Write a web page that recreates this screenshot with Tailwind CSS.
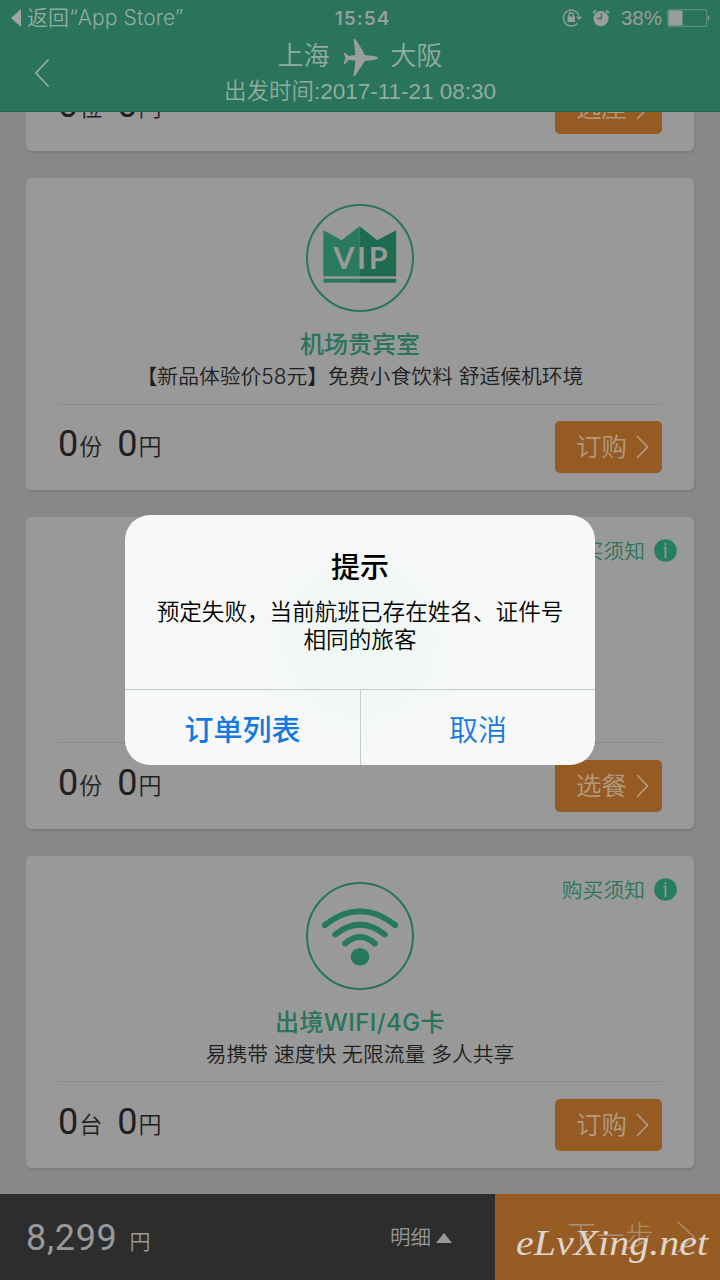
<!DOCTYPE html>
<html lang="zh-CN">
<head>
<meta charset="utf-8">
<title>上海 - 大阪</title>
<script src="https://cdn.jsdelivr.net/npm/@tailwindcss/browser@4"></script>
</head>
<body class="bg-[#888888]">
<div class="relative flex h-[1280px] w-[720px] flex-col overflow-hidden bg-[#888888] font-['Inter','Noto_Sans_CJK_SC',sans-serif] text-[#202020]">

  <!-- Status bar and title -->
  <header class="h-[112px] shrink-0 border-b border-[#226149] bg-[#29745a] text-[#999d9b]">
    <div class="grid h-9 grid-cols-3 items-center pl-[11px] pr-[10px]">
      <div class="flex items-center gap-[5px] whitespace-nowrap text-[21px] leading-9 text-[#93aca2]">
        <svg class="h-[18px] w-[11px]" viewBox="0 0 11 18" fill="#a0a5a3"><path d="M0 9 10 0v18z"/></svg>
        <span class="font-['Inter','Noto_Sans_CJK_SC',sans-serif] font-[350] tracking-[0.1px]">返回“App Store”</span>
      </div>
      <div class="pt-[2px] pl-1 text-center font-['Inter'] text-[19px] font-semibold tracking-[1px]">15:54</div>
      <div class="flex items-center justify-end">
        <svg class="mr-[10px] h-5 w-5" viewBox="0 0 20 20" fill="none" stroke="#999d9b" stroke-width="1.4"><path d="M15.500 15.200A8 8 0 1 1 17 7.500"/><path d="M14 8.500h6L17 12z" fill="#999d9b" stroke="none"/><rect x="5.500" y="8.500" width="7.500" height="5.500" fill="#999d9b" stroke="none"/><path d="M7 9V7a2.200 2.200 0 0 1 4.400 0v2"/></svg>
        <svg class="mr-[11px] h-[18px] w-[18px]" viewBox="0 0 18 18"><circle cx="9" cy="9.600" r="7.600" fill="#999d9b"/><path d="M1 4 4 1.300M17 4l-3-2.700" stroke="#999d9b" stroke-width="1.800"/><path d="M9.300 4.500v5H5" stroke="#29745a" stroke-width="1.300" fill="none"/></svg>
        <span class="mr-[5px] font-['Liberation_Sans'] text-[20.500px] leading-6">38%</span>
        <svg class="h-[18px] w-[43px]" viewBox="0 0 43 18"><rect x=".7" y=".7" width="39" height="16.600" rx="2" fill="none" stroke="#5f8c7a" stroke-width="1.200"/><rect x="1.500" y="1.500" width="14" height="15" rx="1" fill="#999d9b"/><path d="M41 6q3 3 0 6z" fill="#999d9b"/></svg>
      </div>
    </div>
    <div class="grid grid-cols-[100px_1fr_100px]">
      <svg class="ml-[34px] mt-[22px] h-[30px] w-4" viewBox="0 0 16 30" fill="none" stroke="#93aca2" stroke-width="1.800"><path d="M14.500 1.500 2 15l12.500 13.500"/></svg>
      <div class="font-['Liberation_Sans','Noto_Sans_CJK_SC',sans-serif] text-[#93aca2]">
        <div class="flex h-[40px] items-center justify-center gap-[13px] text-[26px] font-[350] leading-[40px]">
          <span>上海</span>
          <svg class="mt-[2px] h-[37px] w-[35px]" viewBox="0 0 35 37" fill="#9a9e9c"><path d="M12 0 14.500 3 22 16l9 1q4 1 4 2t-4 2l-9 1-8 12-2 3h-1.500l2-15.500-7-.5L2 25H.500l2-6L.5 14H2.500l3 3 7-1L10.500 0z"/></svg>
          <span>大阪</span>
        </div>
        <div class="text-center text-[22.500px] font-[350] leading-[32px]">出发时间:2017-11-21 08:30</div>
      </div>
    </div>
  </header>

  <!-- Service list -->
  <main class="flex flex-1 flex-col gap-[27px] overflow-hidden px-[26px]">
    <section class="-mt-[273px] flex h-[312px] shrink-0 flex-col justify-end rounded-[5px] bg-[#999999] px-8 shadow-[1px_2px_2px_#7b7b7b]">
      <div class="flex h-[87px] items-start justify-between pt-[18px]">
        <div class="flex items-baseline font-[350] leading-[47px]"><span class="font-['Roboto'] text-[36px] font-normal">0</span><span class="relative -top-px ml-px mr-[15px] text-[23px]">位</span><span class="font-['Roboto'] text-[36px] font-normal">0</span><span class="relative -top-px ml-px text-[23px]">円</span></div>
        <div class="flex h-[52px] w-[107px] items-center gap-[9px] rounded-[5px] bg-[#955b22] pl-[21px] text-[25.500px] font-[350] text-[#b39b83]"><span>选座</span><svg class="h-6 w-[13px]" viewBox="0 0 13 24" fill="none" stroke="#b39b83" stroke-width="1.700"><path d="m1 1 10.500 11L1 23"/></svg></div>
      </div>
    </section>

    <section class="flex h-[312px] shrink-0 flex-col rounded-[5px] bg-[#999999] px-8 pt-[26px] shadow-[1px_2px_2px_#7b7b7b]">
      <svg class="mx-auto h-[108px] w-[108px] shrink-0" viewBox="0 0 109 109">
        <circle cx="54.500" cy="54.500" r="53.500" fill="none" stroke="#29745a" stroke-width="2"/>
        <path d="M17.500 26.500 36 36.500 54 22.500V73H17.500zM17.500 75.500h36.500v4H17.500z" fill="#2a7a5e"/>
        <path d="M54 22.500 72 36.500 91 26.500V73H54zM54 75.500h37v4H54z" fill="#1e6b50"/>
        <text x="27.500" y="65.500" textLength="55" font-family="Lato, sans-serif" font-size="31" font-weight="700" fill="#999999">VIP</text>
      </svg>
      <h2 class="mt-[16px] text-center text-[24px] font-medium leading-[34px] text-[#29745a]">机场贵宾室</h2>
      <p class="h-[43px] whitespace-nowrap border-b border-[#8a8a8a] text-center text-[20.800px] font-[350] leading-[30px]">【新品体验价58元】免费小食饮料 舒适候机环境</p>
      <div class="flex items-start justify-between pt-[16px]">
        <div class="flex items-baseline font-[350] leading-[47px]"><span class="font-['Roboto'] text-[36px] font-normal">0</span><span class="relative -top-px ml-px mr-[15px] text-[23px]">份</span><span class="font-['Roboto'] text-[36px] font-normal">0</span><span class="relative -top-px ml-px text-[23px]">円</span></div>
        <div class="flex h-[52px] w-[107px] items-center gap-[9px] rounded-[5px] bg-[#955b22] pl-[21px] text-[25.500px] font-[350] text-[#b39b83]"><span>订购</span><svg class="h-6 w-[13px]" viewBox="0 0 13 24" fill="none" stroke="#b39b83" stroke-width="1.700"><path d="m1 1 10.500 11L1 23"/></svg></div>
      </div>
    </section>

    <section class="flex h-[312px] shrink-0 flex-col rounded-[5px] bg-[#999999] px-8 shadow-[1px_2px_2px_#7b7b7b]">
      <div class="-mr-[15px] flex h-[225px] items-start justify-end gap-[9px] pt-[19px] text-[20.800px] font-[350] leading-[32px] text-[#29745a]"><span>购买须知</span><svg class="mt-[3px] h-[23px] w-[23px]" viewBox="0 0 23 23"><circle cx="11.500" cy="11.500" r="11.300" fill="#237f5e"/><path d="M11.500 4v2.500M9.500 8.500h2V19" stroke="#999" stroke-width="1.700" fill="none"/></svg></div>
      <div class="flex items-start justify-between border-t border-[#8a8a8a] pt-[17px]">
        <div class="flex items-baseline font-[350] leading-[47px]"><span class="font-['Roboto'] text-[36px] font-normal">0</span><span class="relative -top-px ml-px mr-[15px] text-[23px]">份</span><span class="font-['Roboto'] text-[36px] font-normal">0</span><span class="relative -top-px ml-px text-[23px]">円</span></div>
        <div class="flex h-[52px] w-[107px] items-center gap-[9px] rounded-[5px] bg-[#955b22] pl-[21px] text-[25.500px] font-[350] text-[#b39b83]"><span>选餐</span><svg class="h-6 w-[13px]" viewBox="0 0 13 24" fill="none" stroke="#b39b83" stroke-width="1.700"><path d="m1 1 10.500 11L1 23"/></svg></div>
      </div>
    </section>

    <section class="relative flex h-[312px] shrink-0 flex-col rounded-[5px] bg-[#999999] px-8 pt-[26px] shadow-[1px_2px_2px_#7b7b7b]">
      <div class="absolute right-[17px] top-[19px] flex items-start gap-[9px] text-[20.800px] font-[350] leading-[32px] text-[#29745a]"><span>购买须知</span><svg class="mt-[3px] h-[23px] w-[23px]" viewBox="0 0 23 23"><circle cx="11.500" cy="11.500" r="11.300" fill="#237f5e"/><path d="M11.500 4v2.500M9.500 8.500h2V19" stroke="#999" stroke-width="1.700" fill="none"/></svg></div>
      <svg class="mx-auto h-[108px] w-[108px] shrink-0" viewBox="0 0 109 109" fill="none" stroke="#26795b" stroke-linecap="round">
        <circle cx="54.500" cy="54.500" r="53.500" stroke="#29745a" stroke-width="2"/>
        <path d="M19 43.500q35.500-28 71 0M29.500 53q25-20 50 0M39.500 62q15-13 30 0" stroke-width="6"/>
        <ellipse cx="54.500" cy="75.500" rx="9.500" ry="9" fill="#26795b" stroke="none"/>
      </svg>
      <h2 class="mt-[16px] text-center text-[24px] font-medium leading-[34px] tracking-[0.4px] text-[#29745a]">出境WIFI/4G卡</h2>
      <p class="h-[42px] whitespace-nowrap border-b border-[#8a8a8a] text-center text-[20.800px] font-[350] leading-[30px]">易携带 速度快 无限流量 多人共享</p>
      <div class="flex items-start justify-between pt-[17px]">
        <div class="flex items-baseline font-[350] leading-[47px]"><span class="font-['Roboto'] text-[36px] font-normal">0</span><span class="relative -top-px ml-px mr-[15px] text-[23px]">台</span><span class="font-['Roboto'] text-[36px] font-normal">0</span><span class="relative -top-px ml-px text-[23px]">円</span></div>
        <div class="flex h-[52px] w-[107px] items-center gap-[9px] rounded-[5px] bg-[#955b22] pl-[21px] text-[25.500px] font-[350] text-[#b39b83]"><span>订购</span><svg class="h-6 w-[13px]" viewBox="0 0 13 24" fill="none" stroke="#b39b83" stroke-width="1.700"><path d="m1 1 10.500 11L1 23"/></svg></div>
      </div>
    </section>
  </main>

  <!-- Total and next step -->
  <footer class="flex h-[86px] shrink-0 bg-[#2d2d2d] text-[#999999]">
    <div class="flex w-[495px] items-center justify-between pl-[26px] pr-[43px] pt-[2px]">
      <div class="flex items-baseline gap-3"><span class="font-['Roboto'] text-[36px] font-normal tracking-[0.7px]">8,299</span><span class="relative -top-px text-[21px] font-[350]">円</span></div>
      <div class="flex items-center gap-[5px] text-[20.500px] font-[350]"><span>明细</span><svg class="h-[10px] w-4" viewBox="0 0 16 10" fill="#999"><path d="M8 0 16 10H0z"/></svg></div>
    </div>
    <div class="relative flex flex-1 items-center bg-[#975c24] pl-[72px] text-[29px] font-light text-[#ad8f73]">
      <span>下一步</span>
      <svg class="ml-[23px] h-[34px] w-[18px]" viewBox="0 0 18 34" fill="none" stroke="#ad8f73" stroke-width="1.500"><path d="m1 2 16 15L1 32"/></svg>
      <svg class="absolute left-[19px] top-[24px] h-[62px] w-[204px]" viewBox="0 0 204 62" fill="#ded6ce"><text x="2" y="37" textLength="192" lengthAdjust="spacingAndGlyphs" font-family="Z003, 'URW Chancery L', 'Liberation Serif', cursive" font-size="36" font-style="italic">eLvXing.net</text></svg>
    </div>
  </footer>

  <!-- Alert -->
  <div class="absolute left-[125px] top-[515px] flex h-[250px] w-[470px] flex-col overflow-hidden rounded-[25px] bg-[#f7f8f8] bg-[radial-gradient(circle_at_50%_50%,#eef7f4_0,#f7f8f8_45%)] text-center text-black">
    <div class="flex-1 pt-[33px]">
      <h1 class="text-[29px] font-medium leading-[40px]">提示</h1>
      <p class="mt-[10px] text-[22.600px] font-[350] leading-[28px]">预定失败，当前航班已存在姓名、证件号<br>相同的旅客</p>
    </div>
    <div class="grid h-[76px] grid-cols-[236px_1fr] border-t border-[#c3cdca] text-[29px] leading-[82px] text-[#1579df]">
      <div class="border-r border-[#c3cdca] font-medium">订单列表</div>
      <div class="font-[350]">取消</div>
    </div>
  </div>
</div>
</body>
</html>
